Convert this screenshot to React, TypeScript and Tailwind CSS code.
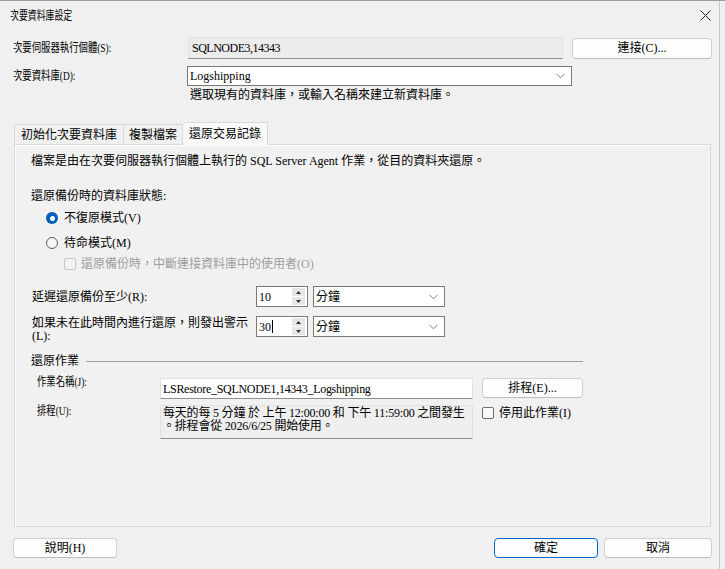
import type { ReactNode } from 'react'

const uiFont = { fontFamily: '"Liberation Serif", "Noto Sans CJK TC", serif' }

function Chevron() {
  return (
    <svg width="9" height="6" viewBox="0 0 9 6" className="shrink-0">
      <path d="M0.5 0.8 L4.5 4.8 L8.5 0.8" fill="none" stroke="#707070" strokeWidth="0.9" />
    </svg>
  )
}

function NarrowLabel({ children, className = '' }: { children: ReactNode; className?: string }) {
  return (
    <span className={`block origin-left scale-x-[0.78] whitespace-nowrap text-[12px] leading-[14px] ${className}`}>
      {children}
    </span>
  )
}

function Button({ children, className = '', primary = false }: { children: ReactNode; className?: string; primary?: boolean }) {
  return (
    <button
      type="button"
      className={`flex h-[20px] items-center justify-center rounded-[4px] border bg-[#fdfdfd] text-[12px] text-black ${
        primary ? 'border-[#0067c0]' : 'border-[#d0d0d0] border-b-[#bcbcbc]'
      } ${className}`}
    >
      {children}
    </button>
  )
}

function Combo({ value, className = '' }: { value: string; className?: string }) {
  return (
    <div className={`flex items-center border border-[#7a7a7a] bg-white pl-[2px] pr-[6px] ${className}`}>
      <span className="flex-1 text-[12px] leading-none text-black">{value}</span>
      <Chevron />
    </div>
  )
}

function Spinner({ value, caret = false }: { value: string; caret?: boolean }) {
  return (
    <div className="flex h-[21px] w-[52px] items-center border border-[#7a7a7a] bg-white">
      <span className="flex flex-1 items-center pl-[2px] text-[12px] leading-none text-black">
        {value}
        {caret ? <span className="ml-[1px] inline-block h-[13px] w-px bg-black" /> : null}
      </span>
      <div className="mr-[2px] flex w-[13px] flex-col gap-px">
        <div className="flex h-[8px] items-center justify-center bg-[#e6e6e6]">
          <svg width="5" height="3" viewBox="0 0 5 3">
            <path d="M0 3 L2.5 0 L5 3 Z" fill="#333" />
          </svg>
        </div>
        <div className="flex h-[8px] items-center justify-center bg-[#e6e6e6]">
          <svg width="5" height="3" viewBox="0 0 5 3">
            <path d="M0 0 L2.5 3 L5 0 Z" fill="#333" />
          </svg>
        </div>
      </div>
    </div>
  )
}

function Radio({ checked, label }: { checked?: boolean; label: string }) {
  return (
    <div className="flex h-[14px] items-center gap-[6px]">
      {checked ? (
        <span className="flex h-[12px] w-[12px] items-center justify-center rounded-full bg-[#005fb8]">
          <span className="h-[5px] w-[5px] rounded-full bg-white" />
        </span>
      ) : (
        <span className="h-[12px] w-[12px] rounded-full border border-[#5f5f5f] bg-[#f7f7f7]" />
      )}
      <span className="text-[12px] leading-none text-black">{label}</span>
    </div>
  )
}

function Checkbox({ label, disabled = false }: { label: string; disabled?: boolean }) {
  return (
    <div className="flex items-center gap-[5px]">
      <span
        className={`h-[12px] w-[12px] rounded-[2px] border ${
          disabled ? 'border-[#c6c6c6] bg-[#f3f3f3]' : 'border-[#6f6f6f] bg-[#f9f9f9]'
        }`}
      />
      <span className={`text-[12px] leading-none ${disabled ? 'text-[#9d9d9d]' : 'text-black'}`}>{label}</span>
    </div>
  )
}

export default function App() {
  return (
    <div
      style={uiFont}
      className="relative h-[569px] w-[725px] overflow-hidden border-t border-[#9c9c9c] bg-[#f0f0f0] text-black"
    >
      {/* window edge on the right */}
      <div className="absolute right-[5px] top-0 h-full w-px bg-[#c8c8c8]" />

      {/* title bar */}
      <div className="flex h-[29px] items-center justify-between pl-[10px] pr-[14px]">
        <span className="inline-block origin-left scale-x-[0.74] text-[12px]">次要資料庫設定</span>
        <svg width="11" height="11" viewBox="0 0 11 11">
          <path d="M0.5 0.5 L10.5 10.5 M10.5 0.5 L0.5 10.5" stroke="#222" strokeWidth="1" />
        </svg>
      </div>

      {/* server / database */}
      <div className="mt-[7px] flex h-[22px] items-center pl-[13px]">
        <div className="w-[175px]">
          <NarrowLabel>次要伺服器執行個體(S):</NarrowLabel>
        </div>
        <div className="flex h-[22px] w-[375px] items-center border border-[#e2e2e2] border-b-[#8e8e8e] bg-[#ececec] pl-[3px]">
          <span className="text-[12px] leading-none tracking-[-0.5px]">SQLNODE3,14343</span>
        </div>
        <Button className="ml-[9px] h-[21px] w-[140px]">連接(C)...</Button>
      </div>

      <div className="mt-[7px] flex h-[20px] items-center pl-[13px]">
        <div className="w-[174px]">
          <NarrowLabel>次要資料庫(D):</NarrowLabel>
        </div>
        <Combo value="Logshipping" className="h-[20px] w-[385px]" />
      </div>
      <div className="mt-[2px] pl-[190px] text-[12px] leading-[14px]">選取現有的資料庫，或輸入名稱來建立新資料庫。</div>

      {/* tabs */}
      <div className="mt-[20px] flex h-[22px] items-end pl-[14px]">
        <div className="flex h-[20px] items-center border border-b-0 border-[#d9d9d9] px-[6px] text-[12px]">初始化次要資料庫</div>
        <div className="flex h-[20px] items-center border border-b-0 border-l-0 border-[#d9d9d9] px-[5px] text-[12px]">複製檔案</div>
        <div className="relative z-10 -mb-px flex h-[23px] items-center border border-b-0 border-l-0 border-[#d9d9d9] bg-[#f9f9f9] px-[6px] text-[12px]">
          還原交易記錄
        </div>
      </div>

      <div className="ml-[14px] h-[383px] w-[697px] border border-[#d9d9d9] bg-[#f1f1f1] shadow-[inset_1px_1px_0_#ffffff]">
        <div className="flex flex-col pl-[16px]">
          <div className="mt-[9px] text-[12px] leading-[14px]">
            檔案是由在次要伺服器執行個體上執行的 SQL Server Agent 作業，從目的資料夾還原。
          </div>

          <div className="mt-[21px] text-[12px] leading-[14px]">還原備份時的資料庫狀態:</div>

          <div className="mt-[8px] pl-[15px]">
            <Radio checked label="不復原模式(V)" />
          </div>
          <div className="mt-[11px] pl-[15px]">
            <Radio label="待命模式(M)" />
          </div>
          <div className="mt-[8px] pl-[33px]">
            <Checkbox disabled label="還原備份時，中斷連接資料庫中的使用者(O)" />
          </div>

          <div className="mt-[16px] flex items-center">
            <span className="w-[225px] pl-[1px] text-[12px] leading-[14px]">延遲還原備份至少(R):</span>
            <Spinner value="10" />
            <Combo value="分鐘" className="ml-[5px] h-[21px] w-[132px]" />
          </div>

          <div className="mt-[9px] flex items-start">
            <span className="w-[225px] pl-[1px] pt-[1px] text-[12px] leading-[13px]">
              如果未在此時間內進行還原，則發出警示
              <br />
              (L):
            </span>
            <Spinner value="30" caret />
            <Combo value="分鐘" className="ml-[5px] h-[21px] w-[132px]" />
          </div>

          {/* restore job group */}
          <div className="mt-[11px] flex h-[14px] items-center gap-[7px]">
            <span className="text-[12px] leading-none">還原作業</span>
            <div className="h-px w-[497px] bg-[#a0a0a0]" />
          </div>

          <div className="mt-[10px] flex items-start pl-[6px]">
            <div className="-mt-[3px] w-[123px]">
              <NarrowLabel>作業名稱(J):</NarrowLabel>
            </div>
            <div className="flex h-[21px] w-[313px] items-center border border-[#e2e2e2] border-b-[#8e8e8e] bg-white pl-[2px]">
              <span className="text-[12px] leading-none tracking-[-0.3px]">LSRestore_SQLNODE1,14343_Logshipping</span>
            </div>
            <Button className="ml-[9px] h-[20px] w-[101px]">排程(E)...</Button>
          </div>

          <div className="mt-[6px] flex items-start pl-[6px]">
            <div className="-mt-px w-[123px]">
              <NarrowLabel>排程(U):</NarrowLabel>
            </div>
            <div className="h-[34px] w-[313px] whitespace-nowrap border border-[#e2e2e2] border-b-[#8e8e8e] bg-[#efefef] pl-[2px] pt-[1px] text-[12px] leading-[13px] tracking-[-0.2px]">
              每天的每 5 分鐘 於 上午 12:00:00 和 下午 11:59:00 之間發生
              <br />
              。排程會從 2026/6/25 開始使用。
            </div>
            <div className="ml-[9px] mt-[2px]">
              <Checkbox label="停用此作業(I)" />
            </div>
          </div>
        </div>
      </div>

      {/* dialog buttons */}
      <div className="mt-[11px] flex items-center px-[13px]">
        <Button className="w-[104px]">說明(H)</Button>
        <div className="flex-1" />
        <Button primary className="w-[104px]">確定</Button>
        <Button className="ml-[6px] w-[108px]">取消</Button>
      </div>
    </div>
  )
}
